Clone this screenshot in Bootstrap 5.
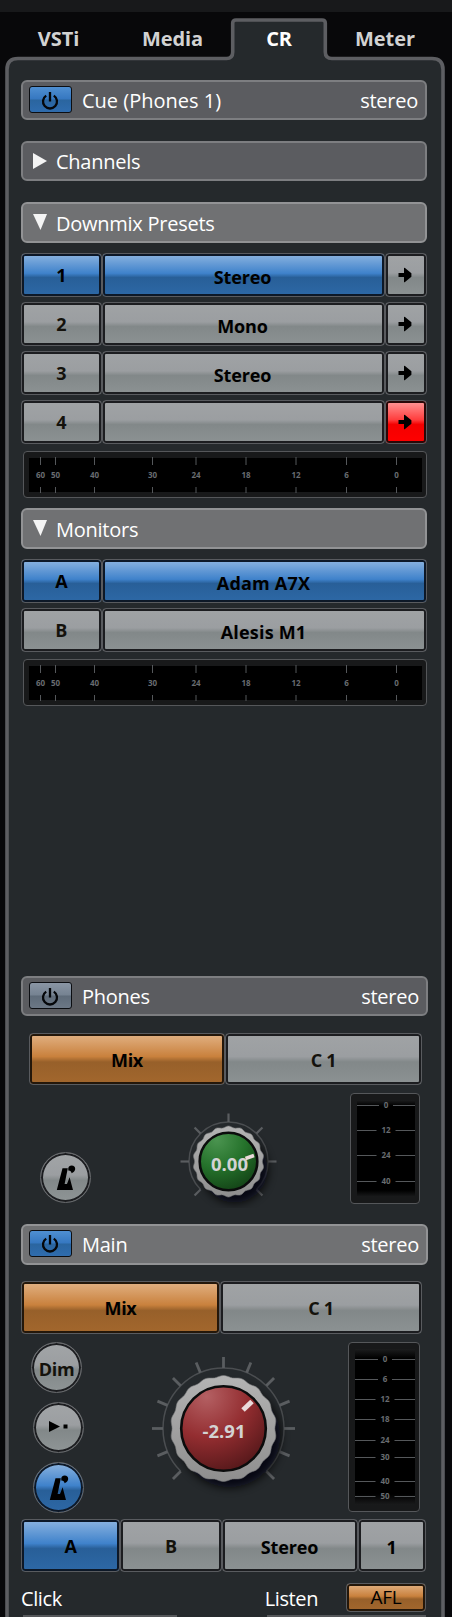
<!DOCTYPE html>
<html lang="en">
<head>
    <meta charset="utf-8">
    <meta name="viewport" content="width=device-width, initial-scale=1">
    <title>Control Room</title>
    <!-- Bootstrap CSS -->
    <link href="https://cdn.jsdelivr.net/npm/bootstrap@5.3.0/dist/css/bootstrap.min.css" rel="stylesheet">
    <style>
        body {
            font-family: "Open Sans", "Noto Sans", sans-serif;
            background-color: #08080a;
            color: #fff;
            width: 452px;
            height: 1617px;
            overflow: hidden;
        }

        .top-strip {
            height: 12px;
            background-color: #18191b;
        }

        .mixer {
            height: 1605px;
        }

        .frame {
            left: 0;
            top: 0;
            z-index: -1;
        }

        .tabs {
            height: 68px;
            padding-top: 12px;
        }

        .tabs .nav-link {
            color: #d2d2d2;
            font-size: 20px;
            font-weight: 700;
            line-height: 30px;
            letter-spacing: -0.1px;
        }

        .tabs .nav-link.active {
            color: #fff;
        }

        .tab-vsti { width: 117px; }
        .tab-media { width: 111px; }
        .tab-cr { width: 102px; }
        .tab-meter { width: 110px; }

        .panel-body {
            padding: 0 24px 0 21px;
        }

        /* section title bars */
        .bar {
            width: 406px;
            height: 40px;
            margin-top: 21px;
            border: 2px solid #7d7e81;
            border-radius: 6px;
            background-color: #5b5c60;
            font-size: 20px;
            letter-spacing: -0.25px;
            line-height: 34px;
        }

        .bar-first { margin-top: 0; }

        .bar-wide {
            width: 407px;
            margin-top: 0;
        }

        .bar-open {
            height: 41px;
            background-color: #707173;
            border-color: #929395;
        }

        .bar-text { padding-top: 2px; }
        .bar-wide.bar-open .bar-text { padding-top: 0; }
        .bar-cue { letter-spacing: 0; }
        .bar-mode { margin-right: -1px; }

        .fold {
            margin-left: 2px;
            margin-right: 5px;
        }

        .power {
            width: 43px;
            height: 27px;
            margin: -1px 10px 0 -2px;
            padding: 2px 1px 0 0;
            border: 1px solid #0c0e12;
            border-radius: 3px;
            background: linear-gradient(#4f8fd2, #3577c0 49%, #2a659f 51%, #2f6cae);
        }

        .bar-open .power { margin-top: -3px; }

        .power-off {
            background: linear-gradient(#8a96a5, #758291 49%, #5e6b79 51%, #6c7886);
        }

        /* pad buttons */
        .pad {
            height: 44px;
            padding: 0;
            border: 1px solid #595b5f;
            border-radius: 4px;
            box-shadow: inset 0 0 0 2px #1c1d20;
            background: linear-gradient(#a0a3a5, #9b9ea1 45%, #828889 56%, #8c9293);
            color: #14120c;
            font-size: 18px;
            font-weight: 700;
            letter-spacing: -0.3px;
            line-height: 42px;
            text-align: center;
        }

        .pad-blue {
            background: linear-gradient(#8cb4e0, #3f82cb 46%, #285f98 56%, #2d68a6);
            box-shadow: inset 0 0 0 2px #0d1827;
            color: #000;
        }

        .pad-orange {
            background: linear-gradient(#e2b284, #c9813d 45%, #97602a 56%, #a3672d);
            box-shadow: inset 0 0 0 2px #24170a;
            color: #000;
        }

        .pad-red {
            background: linear-gradient(#ff9a9a, #ff3c3c 45%, #f40000 56%, #ff0000);
            box-shadow: inset 0 0 0 2px #2a0808;
        }

        .pad-name {
            color: #000;
            line-height: 46px;
            padding-right: 1px;
            letter-spacing: -0.1px;
        }

        .pad-monitor {
            letter-spacing: 0.2px;
        }

        .w-key { width: 80.5px; }

        .w-arrow {
            width: 42px;
            padding-right: 1px;
            line-height: 38px;
        }

        .pad-tall {
            height: 53px;
            line-height: 52px;
        }

        .pad-tall.pad-name { line-height: 55px; }

        .rows {
            width: 405.5px;
            gap: 5px;
            margin-top: 10px;
        }

        .level {
            border: 1px solid #55575a;
            border-radius: 4px;
            background-color: #18191a;
        }

        .level-h {
            width: 404px;
            height: 47px;
            margin: 7px 0 0 2px;
        }

        .bar-monitors { margin-top: 10px; }

        .level text, .dial text {
            font-family: "Open Sans", sans-serif;
            font-weight: 700;
            text-anchor: middle;
        }

        .level text {
            font-size: 8px;
            fill: #686c70;
        }

        .round {
            width: 51px;
            height: 51px;
            border: 1px solid #66686b;
            border-radius: 50%;
            box-shadow: inset 0 0 0 2px #1c1d20;
            background: linear-gradient(#a2a5a7, #9b9ea1 45%, #828889 56%, #8f9596);
            color: #14120c;
            font-size: 18px;
            font-weight: 700;
            letter-spacing: -0.3px;
        }

        .round-text { padding-top: 3px; }

        .round-blue {
            background: linear-gradient(#8cb4e0, #3f82cb 46%, #285f98 56%, #2d68a6);
            box-shadow: inset 0 0 0 2px #0d1827;
        }

        .free-area { height: 270px; }
        .phones-area { height: 139px; }
        .main-area { height: 185px; }

        .phones-pads {
            width: 393px;
            margin: 17px 0 0 8px;
        }

        .phones-pads .pad { height: 52px; }
        .phones-mix { width: 196px; }
        .phones-click { margin: 67px 0 0 19px; }
        .phones-dial { margin: 13px 0 0 68px; }

        .phones-level {
            width: 70px;
            height: 111px;
            margin: 8px 0 0 51px;
        }

        .main-pads {
            width: 401px;
            margin-top: 16px;
        }

        .main-mix { width: 199px; }

        .main-keys {
            width: 53px;
            margin: 8px 0 0 10px;
            gap: 9px;
        }

        .main-dial { margin: 14px 0 0 59px; }

        .main-level {
            width: 72px;
            height: 170px;
            margin: 8px 0 0 45px;
        }

        .select-pads { width: 405px; }
        .select-a { width: 99px; }
        .select-b { width: 102px; }
        .select-last { width: 68px; }

        .foot {
            height: 43px;
            font-size: 20px;
            letter-spacing: -0.4px;
            line-height: 30px;
        }

        .foot-text { padding-top: 12px; }
        .foot-listen { margin-right: 28px; }

        .afl {
            width: 80px;
            height: 29px;
            margin: 11px 2px 0 0;
            font-size: 19px;
            font-weight: 400;
            line-height: 27px;
        }

        .foot-edge {
            height: 2px;
            background-color: #55575a;
        }

        .edge-left { width: 154px; margin-left: 2px; }
        .edge-right { width: 159px; margin-right: 2px; }
    </style>
</head>
<body>
    <!-- shared icons -->
    <svg class="d-none">
        <symbol id="power" viewBox="0 0 20 20">
            <path d="M6.2 4.6A7 7 0 1 0 13.8 4.6M10 1V10.5" fill="none" stroke="#05070a" stroke-width="2.3"/>
        </symbol>
        <symbol id="arrow" viewBox="0 0 14 16">
            <path d="M0.5 6H6V1Q6 0.3 7 1L13.4 6.3V9.7L7 15Q6 15.7 6 15V10H0.5Z" fill="#000"/>
        </symbol>
        <symbol id="click" viewBox="0 0 20 26">
            <path d="M6.5 3.3H11.8L8.6 19H11L13.6 12.3L17 25H0.8Z" fill="#000"/>
            <path d="M12.3 3.2Q12.8 0.6 15.6 0.6Q19.2 0.8 19.2 4Q19 6.8 15.4 8.2Q15.9 5.8 12.3 5.4Z" fill="#000"/>
        </symbol>
    </svg>

    <div class="top-strip"></div>
    <div class="mixer position-relative">
        <svg class="frame position-absolute" width="452" height="1605">
            <path d="M7 1610V57.5Q7 46.5 18 46.5H226.5Q232.7 46.5 232.7 40V11Q232.7 8 236 8H322Q325.3 8 325.3 11V40Q325.3 46.5 332 46.5H432Q443 46.5 443 57.5V1610Z" fill="#25292c" stroke="#5d5e62" stroke-width="3.6"/>
        </svg>

        <nav class="tabs nav flex-nowrap">
            <a class="nav-link tab-vsti p-0 text-center">VSTi</a>
            <a class="nav-link tab-media p-0 text-center">Media</a>
            <a class="nav-link tab-cr p-0 text-center active">CR</a>
            <a class="nav-link tab-meter p-0 text-center">Meter</a>
        </nav>

        <div class="panel-body">
            <!-- Cue -->
            <div class="bar bar-first d-flex align-items-center px-2">
                <span class="power d-flex justify-content-center align-items-center"><svg width="20" height="20"><use href="#power"/></svg></span>
                <span class="bar-text bar-cue flex-fill">Cue (Phones 1)</span>
                <span class="bar-text bar-mode">stereo</span>
            </div>

            <div class="bar d-flex align-items-center px-2">
                <svg width="18" height="18" class="fold"><path d="M0 1L14 9L0 17Z" fill="#f4f4f4"/></svg>
                <span class="bar-text">Channels</span>
            </div>

            <div class="bar bar-open d-flex align-items-center px-2">
                <svg width="18" height="18" class="fold"><path d="M0 0H14L7.5 16Z" fill="#f4f4f4"/></svg>
                <span class="bar-text">Downmix Presets</span>
            </div>
            <div class="rows d-flex flex-column">
                <div class="d-flex">
                    <div class="pad pad-blue w-key">1</div>
                    <div class="pad pad-blue pad-name flex-fill">Stereo</div>
                    <div class="pad w-arrow"><svg width="14" height="16"><use href="#arrow"/></svg></div>
                </div>
                <div class="d-flex">
                    <div class="pad w-key">2</div>
                    <div class="pad pad-name flex-fill">Mono</div>
                    <div class="pad w-arrow"><svg width="14" height="16"><use href="#arrow"/></svg></div>
                </div>
                <div class="d-flex">
                    <div class="pad w-key">3</div>
                    <div class="pad pad-name flex-fill">Stereo</div>
                    <div class="pad w-arrow"><svg width="14" height="16"><use href="#arrow"/></svg></div>
                </div>
                <div class="d-flex">
                    <div class="pad w-key">4</div>
                    <div class="pad pad-name flex-fill"></div>
                    <div class="pad pad-red w-arrow"><svg width="14" height="16"><use href="#arrow"/></svg></div>
                </div>
            </div>
            <div class="level level-h"></div>

            <div class="bar bar-open bar-monitors d-flex align-items-center px-2">
                <svg width="18" height="18" class="fold"><path d="M0 0H14L7.5 16Z" fill="#f4f4f4"/></svg>
                <span class="bar-text">Monitors</span>
            </div>
            <div class="rows d-flex flex-column">
                <div class="d-flex">
                    <div class="pad pad-blue w-key">A</div>
                    <div class="pad pad-blue pad-name pad-monitor flex-fill">Adam A7X</div>
                </div>
                <div class="d-flex">
                    <div class="pad w-key">B</div>
                    <div class="pad pad-name pad-monitor flex-fill">Alesis M1</div>
                </div>
            </div>
            <div class="level level-h"></div>
            <div class="free-area"></div>

            <!-- Phones -->
            <div class="bar bar-wide d-flex align-items-center px-2">
                <span class="power power-off d-flex justify-content-center align-items-center"><svg width="20" height="20"><use href="#power"/></svg></span>
                <span class="bar-text flex-fill">Phones</span>
                <span class="bar-text bar-mode">stereo</span>
            </div>
            <div class="phones-pads d-flex">
                <div class="pad pad-tall pad-orange phones-mix">Mix</div>
                <div class="pad pad-tall flex-fill">C 1</div>
            </div>
            <div class="phones-area d-flex align-items-start">
                <div class="round phones-click d-flex justify-content-center align-items-center flex-shrink-0"><svg width="20" height="26"><use href="#click"/></svg></div>
                <svg class="dial phones-dial flex-shrink-0" width="140" height="110" id="dialPhones"></svg>
                <div class="level phones-level flex-shrink-0" id="levelPhones"></div>
            </div>

            <!-- Main -->
            <div class="bar bar-wide bar-open d-flex align-items-center px-2">
                <span class="power d-flex justify-content-center align-items-center"><svg width="20" height="20"><use href="#power"/></svg></span>
                <span class="bar-text flex-fill">Main</span>
                <span class="bar-text bar-mode">stereo</span>
            </div>
            <div class="main-pads d-flex">
                <div class="pad pad-tall pad-orange main-mix">Mix</div>
                <div class="pad pad-tall flex-fill">C 1</div>
            </div>
            <div class="main-area d-flex align-items-start">
                <div class="main-keys d-flex flex-column flex-shrink-0">
                    <div class="round round-text d-flex justify-content-center align-items-center">Dim</div>
                    <div class="round d-flex justify-content-center align-items-center align-self-end"><svg width="20" height="16"><path d="M0 1L11 6.5L0 12ZM14.5 4.5H18.5V8.5H14.5Z"/></svg></div>
                    <div class="round round-blue d-flex justify-content-center align-items-center align-self-end"><svg width="20" height="26"><use href="#click"/></svg></div>
                </div>
                <svg class="dial main-dial flex-shrink-0" width="160" height="160" id="dialMain"></svg>
                <div class="level main-level flex-shrink-0" id="levelMain"></div>
            </div>
            <div class="select-pads d-flex">
                <div class="pad pad-tall pad-blue select-a">A</div>
                <div class="pad pad-tall select-b">B</div>
                <div class="pad pad-tall pad-name flex-fill">Stereo</div>
                <div class="pad pad-tall pad-name select-last">1</div>
            </div>
            <div class="foot d-flex">
                <span class="foot-text flex-fill">Click</span>
                <span class="foot-text foot-listen">Listen</span>
                <span class="pad pad-orange afl">AFL</span>
            </div>
            <div class="d-flex justify-content-between">
                <div class="foot-edge edge-left"></div>
                <div class="foot-edge edge-right"></div>
            </div>
        </div>
    </div>

    <!-- Bootstrap Bundle with Popper -->
    <script src="https://cdn.jsdelivr.net/npm/bootstrap@5.3.0/dist/js/bootstrap.bundle.min.js"></script>
    <script>
        // Horizontal meters: x position and label of every mark
        var hMarks = [[16.5, 60], [31.5, 50], [70.5, 40], [128.5, 30], [172, 24], [222, 18], [272, 12], [322.5, 6], [372.5, 0]];
        document.querySelectorAll(".level-h").forEach(function(el) {
            var s = '<svg class="d-block" width="402" height="45"><rect x="5" y="6" width="393" height="34" fill="#000"/>';
            hMarks.forEach(function(m) {
                s += '<path d="M' + m[0] + ' 5V13M' + m[0] + ' 35V41" stroke="#55585b"/>';
                s += '<text x="' + m[0] + '" y="25.5">' + m[1] + '</text>';
            });
            el.innerHTML = s + '</svg>';
        });

        // Vertical meters
        function drawLevel(id, w, h, marks) {
            var mid = w / 2;
            var s = '<svg class="d-block" width="' + w + '" height="' + h + '">' +
                '<defs><linearGradient id="g' + id + '" x2="0" y2="1"><stop offset="0" stop-color="#1c1d1e"/><stop offset=".06" stop-color="#000"/><stop offset=".93" stop-color="#000"/><stop offset="1" stop-color="#1a1b1c"/></linearGradient></defs>' +
                '<rect x="6" y="6" width="' + (w - 10) + '" height="' + (h - 12) + '" fill="url(#g' + id + ')"/>';
            marks.forEach(function(m) {
                var gap = m[1] < 10 ? 7 : 9.5;
                s += '<path d="M6 ' + m[0] + 'H' + (mid + 1 - gap) + 'M' + (mid + 1 + gap) + ' ' + m[0] + 'H' + (w - 4) + '" stroke="#55585b"/>';
                s += '<text x="' + (mid + 1) + '" y="' + (m[0] + 2) + '">' + m[1] + '</text>';
            });
            document.getElementById(id).innerHTML = s + '</svg>';
        }
        drawLevel("levelPhones", 68, 109, [[11.5, 0], [36.5, 12], [61.5, 24], [87.5, 40]]);
        drawLevel("levelMain", 70, 168, [[16.5, 0], [36.5, 6], [56.5, 12], [76.5, 18], [97.5, 24], [114.5, 30], [138.5, 40], [153.5, 50]]);

        // Rotary dials
        function drawDial(id, o) {
            var s = '<defs><radialGradient id="c' + id + '" cx=".3" cy=".12" r=".98"><stop offset="0" stop-color="' + o.hi + '"/><stop offset=".5" stop-color="' + o.mid + '"/><stop offset="1" stop-color="' + o.lo + '"/></radialGradient>' +
                '<linearGradient id="r' + id + '" x2="0" y2="1"><stop offset="0" stop-color="#b4b4b4"/><stop offset="1" stop-color="#8e8e8e"/></linearGradient>' +
                '<filter id="f' + id + '" x="-50%" y="-50%" width="200%" height="200%"><feGaussianBlur stdDeviation="5"/></filter></defs>';
            var k = Math.SQRT1_2 * o.ring;
            s += '<g transform="translate(' + o.cx + ' ' + o.cy + ')">';
            s += '<path d="M' + -k + ' ' + k + 'A' + o.ring + ' ' + o.ring + ' 0 1 1 ' + k + ' ' + k + '" fill="none" stroke="#4b4e51" stroke-width="1.5"/>';
            for (var a = -135; a <= 135; a += o.step) {
                s += '<path d="M0 ' + -o.ring + 'V' + -o.tick + '" transform="rotate(' + a + ')" stroke="#5a5d60" stroke-width="' + o.tw + '"/>';
            }
            s += '<circle cx="6" cy="8" r="' + (o.gear - 2) + '" fill="#050607" opacity=".85" filter="url(#f' + id + ')"/>';
            // toothed rim
            var d = "";
            for (var i = 0; i < 180; i++) {
                var t = i * Math.PI / 90;
                var r = o.gear - 0.8 + Math.cos(t * o.teeth) * 0.8;
                d += (i ? "L" : "M") + (r * Math.sin(t)).toFixed(2) + " " + (-r * Math.cos(t)).toFixed(2);
            }
            s += '<path d="' + d + 'Z" fill="url(#r' + id + ')" stroke="#77797a" stroke-width=".6"/>';
            s += '<circle r="' + (o.disc + 0.8) + '" fill="url(#c' + id + ')" stroke="#0b0c0c" stroke-width="2.6"/>';
            s += '<path d="' + o.hand + '" stroke="#eadada" stroke-width="' + o.hw + '"/>';
            s += '<text x="' + o.tx + '" y="' + o.ty + '" font-size="18.5" fill="#d3d3d3">' + o.value + '</text></g>';
            document.getElementById(id).innerHTML = s;
        }
        drawDial("dialPhones", {
            cx: 69.5, cy: 63.5, ring: 39.5, tick: 48, step: 45, tw: 2.2, gear: 35.5, teeth: 18, disc: 28,
            hi: "#4b9450", mid: "#25722b", lo: "#123f15", hand: "M17 -3L25.5 -6", hw: 3.5, tx: 1, ty: 9.5, value: "0.00"
        });
        drawDial("dialMain", {
            cx: 80.5, cy: 80.5, ring: 60.5, tick: 71.5, step: 22.5, tw: 2.8, gear: 53, teeth: 18, disc: 41.5,
            hi: "#b46063", mid: "#932d30", lo: "#4f1618", hand: "M19.5 -18.5L28.5 -27", hw: 5, tx: 0.5, ty: 9.5, value: "-2.91"
        });
    </script>
</body>
</html>
